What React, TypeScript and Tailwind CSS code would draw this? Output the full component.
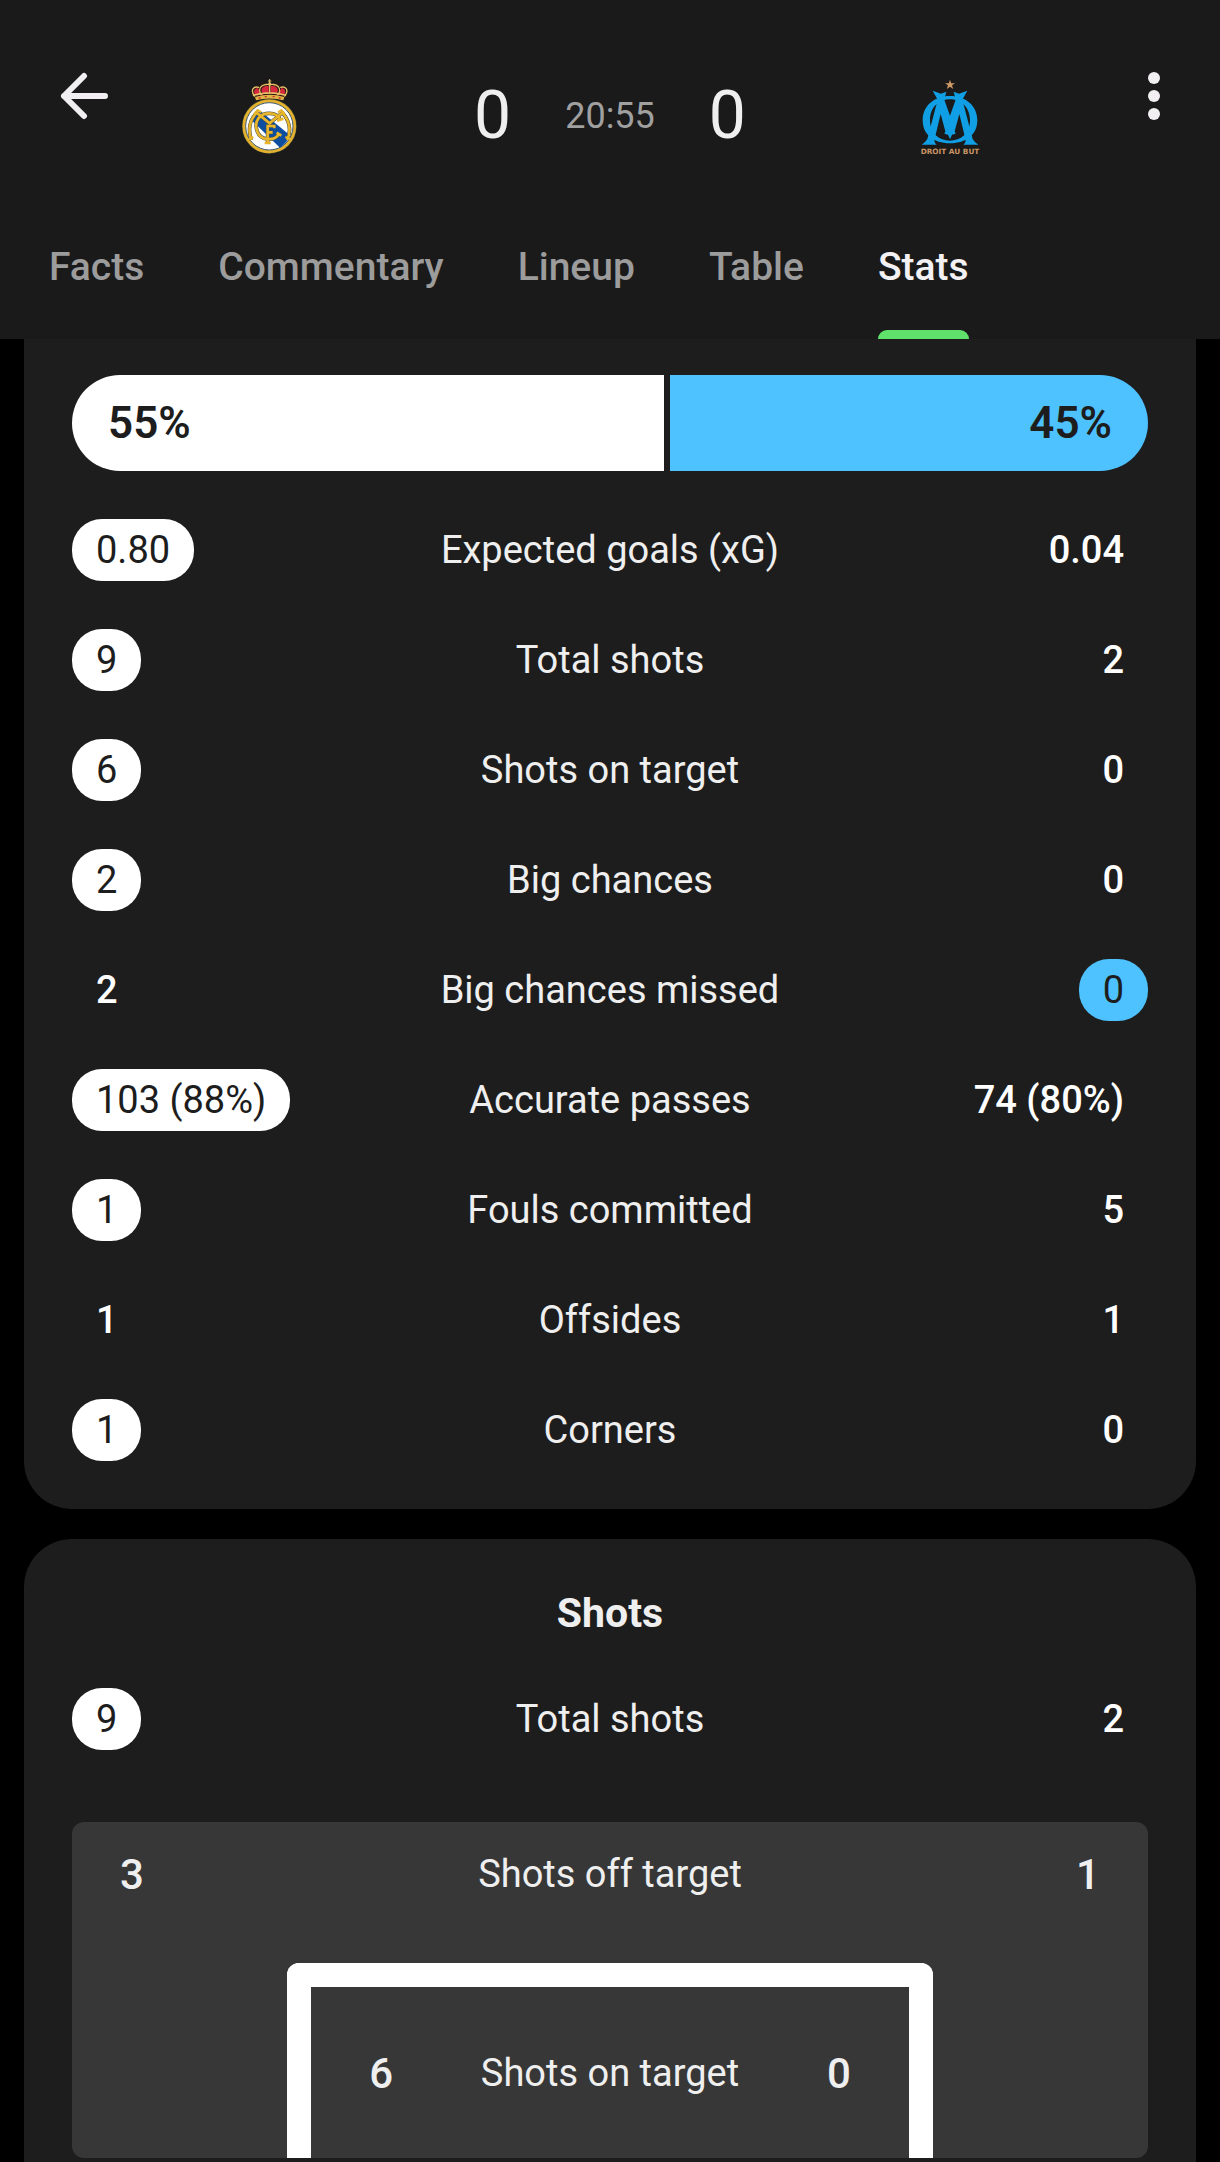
import React from "react";

type Side = "home" | "away" | null;
type Stat = { label: string; home: string; away: string; lead: Side };

const tabs = ["Facts", "Commentary", "Lineup", "Table", "Stats"];

const topStats: Stat[] = [
  { label: "Expected goals (xG)", home: "0.80", away: "0.04", lead: "home" },
  { label: "Total shots", home: "9", away: "2", lead: "home" },
  { label: "Shots on target", home: "6", away: "0", lead: "home" },
  { label: "Big chances", home: "2", away: "0", lead: "home" },
  { label: "Big chances missed", home: "2", away: "0", lead: "away" },
  { label: "Accurate passes", home: "103 (88%)", away: "74 (80%)", lead: "home" },
  { label: "Fouls committed", home: "1", away: "5", lead: "home" },
  { label: "Offsides", home: "1", away: "1", lead: null },
  { label: "Corners", home: "1", away: "0", lead: "home" },
];

const shotStats: Stat[] = [{ label: "Total shots", home: "9", away: "2", lead: "home" }];

function HomeCrest() {
  return (
    <svg viewBox="60 51 180 234" className="h-[78px] w-[60px]" role="img" aria-label="Real Madrid">
      <path d="M103 117 C90 98 96 82 112 80 C120 68 136 68 149 70 C162 68 178 68 186 80 C203 82 208 98 195 117 Z" fill="#2a1a10" />
      <path d="M107 106 C98 94 103 86 114 84 C116 92 122 100 130 104 Z" fill="#d8283c" />
      <path d="M191 106 C200 94 195 86 184 84 C182 92 176 100 168 104 Z" fill="#d8283c" />
      <path d="M127 100 C119 84 132 76 146 78 L146 102 Z" fill="#d8283c" />
      <path d="M171 100 C179 84 166 76 152 78 L152 102 Z" fill="#d8283c" />
      <g fill="none" stroke="#e6c36a" strokeWidth="4" strokeLinecap="round">
        <path d="M104 108 C88 88 104 78 116 82" />
        <path d="M194 108 C210 88 194 78 182 82" />
        <path d="M124 104 C110 84 128 70 149 74 C170 70 188 84 174 104" strokeDasharray="5 2" />
        <path d="M149 76 V100" />
        <path d="M101 106 Q149 92 197 106" strokeWidth="5" strokeDasharray="6 3" />
      </g>
      <path d="M105 111 Q149 98 193 111 L190 121 Q149 110 108 121 Z" fill="#e0b345" />
      <path d="M116 114 h6 M134 110 h6 M158 110 h6 M176 114 h6" stroke="#c92a3a" strokeWidth="4" />
      <path d="M149 57 V71 M144 63 H154" stroke="#e6c36a" strokeWidth="3" />
      <circle cx="149" cy="71" r="4" fill="#e6c36a" />
      <circle cx="148" cy="199" r="82" fill="#4d5238" />
      <circle cx="148" cy="199" r="76" fill="#fff" stroke="#e3b12d" strokeWidth="9" />
      <circle cx="148" cy="199" r="71" fill="none" stroke="#3b5468" strokeWidth="3" />
      <path d="M106 164 L122 154 L210 226 Q200 250 180 263 L94 180 Z" fill="#0d4ea0" />
      <path d="M150 205 L176 204 L168 224 L150 236 Z" fill="#0d4ea0" />
      <g fill="none" stroke="#47503f" strokeWidth="11">
        <path d="M94 240 C81 202 92 177 110 158 L149 190 L187 158 C207 180 216 206 202 240" />
        <path d="M177 222 C163 245 122 242 112 215 C99 180 123 160 148 160 C164 160 176 167 181 180" />
        <path d="M143 249 V198 H163 M143 217 H158" />
      </g>
      <g fill="none" stroke="#e8b52c" strokeWidth="8">
        <path d="M94 240 C81 202 92 177 110 158 L149 190 L187 158 C207 180 216 206 202 240" />
        <path d="M86 237 L100 231 M196 231 L211 237 M102 162 L113 150 L124 157 M174 157 L184 150 L194 162" strokeWidth="6" />
        <path d="M177 222 C163 245 122 242 112 215 C99 180 123 160 148 160 C164 160 176 167 181 180 M171 182 L190 176 M170 218 L184 227" />
        <path d="M143 249 V198 H163 V205 M143 217 H158 M134 249 H152" />
      </g>
    </svg>
  );
}

function AwayCrest() {
  return (
    <svg viewBox="60 51 180 234" className="h-[78px] w-[60px]" role="img" aria-label="Olympique de Marseille">
      <path d="M150 59 L153.500 69.500 L165 69.500 L156 76 L159.500 87 L150 80.500 L140.500 87 L144 76 L135 69.500 L146.500 69.500 Z" fill="#d09a66" />
      <path
        fillRule="evenodd"
        d="M150 108 C197 108 232 137 232 181 C232 224 199 250 150 250 C101 250 68 224 68 181 C68 137 103 108 150 108 Z M150 118 C121 118 90 138 90 181 C90 221 118 242 150 242 C182 242 210 221 210 181 C210 138 179 118 150 118 Z"
        fill="#109fe4"
      />
      <path
        d="M98 92 L123 101 L139 95 L133 119 L150 167 L167 119 L161 95 L177 101 L202 92 L187 119 L218 237 Q225 249 235 254 H190 Q199 246 196 236 L178 162 L164 214 L167 221 L156 224 L150 238 L144 224 L133 221 L136 214 L122 162 L104 236 Q101 246 110 254 H65 Q75 249 82 237 L113 119 Z"
        fill="#109fe4"
      />
      <text x="150" y="283" textAnchor="middle" fontFamily="DejaVu Sans, sans-serif" fontWeight="700" fontSize="22" fill="#c99464">
        DROIT AU BUT
      </text>
    </svg>
  );
}

function Value({ text, side, lead }: { text: string; side: "home" | "away"; lead: Side }) {
  const base = "inline-block h-[62px] rounded-[30px] px-6 leading-[62px] whitespace-nowrap";
  if (lead !== side) return <span className={`${base} font-medium text-white`}>{text}</span>;
  return side === "home" ? (
    <span className={`${base} bg-white font-[450] text-[#1d1d1d]`}>{text}</span>
  ) : (
    <span className={`${base} bg-[#4dc2ff] font-[450] text-[#1d1d1d]`}>{text}</span>
  );
}

function StatTable({ stats, label }: { stats: Stat[]; label: string }) {
  return (
    <table className="w-full table-fixed text-[38px]" aria-label={label}>
      <tbody>
        {stats.map((s) => (
          <tr key={s.label} className="h-[110px]">
            <td className="w-[30%] p-0 text-left align-middle">
              <div className="flex">
                <Value text={s.home} side="home" lead={s.lead} />
              </div>
            </td>
            <th scope="row" className="p-0 text-center align-middle font-normal whitespace-nowrap">
              {s.label}
            </th>
            <td className="w-[30%] p-0 align-middle">
              <div className="flex justify-end">
                <Value text={s.away} side="away" lead={s.lead} />
              </div>
            </td>
          </tr>
        ))}
      </tbody>
    </table>
  );
}

export default function App() {
  return (
    <div className="min-h-screen bg-black font-[Roboto,sans-serif] text-[#efefef]">
      <header className="bg-[#1a1a1a]">
        <div className="flex h-[195px] items-start">
          <button type="button" aria-label="Back" className="mt-12 flex h-24 w-[132px] items-center justify-center pl-9">
            <svg viewBox="0 0 48 48" className="size-12" fill="none" stroke="#f1eff1" strokeWidth="6" strokeLinecap="round" strokeLinejoin="round">
              <path d="M24 4 L4 24 L24 44 M4 24 H45" />
            </svg>
          </button>
          <div className="mt-9 flex h-[159px] flex-1 items-center">
            <div className="flex flex-1 justify-center">
              <HomeCrest />
            </div>
            <div className="flex w-[404px] items-center justify-center gap-[54px]">
              <span className="text-[66px] leading-none">0</span>
              <span className="text-[36px] leading-none text-[#a0a0a0]">20:55</span>
              <span className="text-[66px] leading-none">0</span>
            </div>
            <div className="flex flex-1 justify-center">
              <AwayCrest />
            </div>
          </div>
          <button type="button" aria-label="More options" className="mt-12 flex h-24 w-[132px] items-center justify-center">
            <svg viewBox="0 0 12 48" className="h-12 w-3" fill="#f1eff1">
              <circle cx="6" cy="6" r="6" />
              <circle cx="6" cy="24" r="6" />
              <circle cx="6" cy="42" r="6" />
            </svg>
          </button>
        </div>
        <div role="tablist" className="flex h-36 gap-[74px] pl-[49px]">
          {tabs.map((t) => {
            const active = t === "Stats";
            return (
              <button
                key={t}
                type="button"
                role="tab"
                aria-selected={active}
                className={active ? "relative text-[39px] font-medium text-[#f3f1f3]" : "text-[39px] font-medium text-[#9c9c9c]"}
              >
                {t}
                {active && <span className="absolute inset-x-0 bottom-0 h-[9px] rounded-t-[9px] bg-[#5fe16c]" />}
              </button>
            );
          })}
        </div>
      </header>

      <main className="flex flex-col gap-[30px] px-6">
        <section className="rounded-b-[48px] bg-[#1d1d1d] px-12 pt-9 pb-6">
          <div className="mb-6 flex h-24 gap-[6px] text-[44px] font-semibold text-[#1d1d1d]" aria-label="Ball possession">
            <div className="flex w-[55%] items-center rounded-l-full bg-white px-9">55%</div>
            <div className="flex flex-1 items-center justify-end rounded-r-full bg-[#4dc2ff] px-9">45%</div>
          </div>
          <StatTable stats={topStats} label="Top stats" />
        </section>

        <section className="rounded-t-[48px] bg-[#1d1d1d] px-12 pt-12 pb-1">
          <h2 className="mb-[25px] text-center text-[41px] leading-[52px] font-bold">Shots</h2>
          <StatTable stats={shotStats} label="Shots" />
          <div className="mt-12 flex h-[336px] flex-col justify-between rounded-xl bg-[#373737]">
            <div className="flex h-[105px] items-center justify-between px-12 text-[42px] font-medium">
              <span>3</span>
              <span className="text-[38px] font-normal">Shots off target</span>
              <span>1</span>
            </div>
            <div className="mx-auto flex h-[195px] w-3/5 items-center justify-between rounded-t-xl border-24 border-b-0 border-white px-[58px] pt-[2px] text-[42px] font-medium">
              <span>6</span>
              <span className="text-[38px] font-normal">Shots on target</span>
              <span>0</span>
            </div>
          </div>
        </section>
      </main>
    </div>
  );
}
